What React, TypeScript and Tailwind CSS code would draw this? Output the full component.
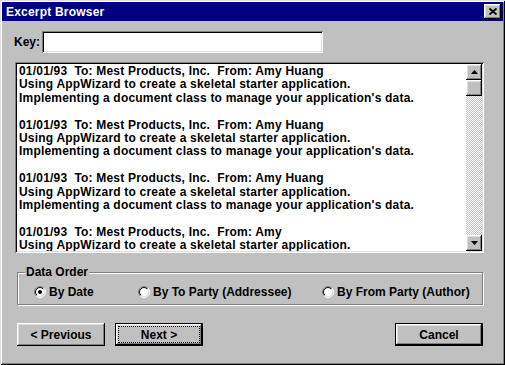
import React from "react";

const raised =
  "shadow-[inset_-1px_-1px_#000,inset_1px_1px_#fff,inset_-2px_-2px_#808080,inset_2px_2px_#dfdfdf]";
const sunken =
  "shadow-[inset_1px_1px_#808080,inset_-1px_-1px_#fff,inset_2px_2px_#000,inset_-2px_-2px_#dfdfdf]";

const entries = [
  [
    "01/01/93  To: Mest Products, Inc.  From: Amy Huang",
    "Using AppWizard to create a skeletal starter application.",
    "Implementing a document class to manage your application's data.",
  ],
  [
    "01/01/93  To: Mest Products, Inc.  From: Amy Huang",
    "Using AppWizard to create a skeletal starter application.",
    "Implementing a document class to manage your application's data.",
  ],
  [
    "01/01/93  To: Mest Products, Inc.  From: Amy Huang",
    "Using AppWizard to create a skeletal starter application.",
    "Implementing a document class to manage your application's data.",
  ],
  [
    "01/01/93  To: Mest Products, Inc.  From: Amy",
    "Using AppWizard to create a skeletal starter application.",
  ],
];

function Radio({ id, checked }: { id: string; checked?: boolean }) {
  return (
    <svg width="12" height="12" viewBox="0 0 12 12" className="shrink-0">
      <defs>
        <linearGradient id={`o-${id}`} x1="0" y1="0" x2="1" y2="1">
          <stop offset="0.5" stopColor="#808080" />
          <stop offset="0.5" stopColor="#ffffff" />
        </linearGradient>
        <linearGradient id={`i-${id}`} x1="0" y1="0" x2="1" y2="1">
          <stop offset="0.5" stopColor="#000000" />
          <stop offset="0.5" stopColor="#dfdfdf" />
        </linearGradient>
      </defs>
      <circle cx="6" cy="6" r="5.5" fill="none" stroke={`url(#o-${id})`} />
      <circle cx="6" cy="6" r="4.5" fill="#fff" stroke={`url(#i-${id})`} />
      {checked && <circle cx="6" cy="6" r="2" fill="#000" />}
    </svg>
  );
}

function Arrow({ up }: { up?: boolean }) {
  return (
    <svg width="7" height="4" viewBox="0 0 7 4">
      <path d={up ? "M3.5 0 L7 4 L0 4 Z" : "M0 0 L7 0 L3.5 4 Z"} fill="#000" />
    </svg>
  );
}

function Button({ label, isDefault, focused }: { label: string; isDefault?: boolean; focused?: boolean }) {
  return (
    <div className={`w-[88px] h-[23px] flex ${isDefault ? "border border-black" : ""}`}>
      <div className={`flex-1 flex items-center justify-center ${raised} p-[3px]`}>
        <div
          className={`flex-1 self-stretch flex items-center justify-center ${
            focused ? "outline outline-1 outline-dotted outline-black" : ""
          }`}
        >
          {label}
        </div>
      </div>
    </div>
  );
}

export default function App() {
  return (
    <div
      className={`w-[505px] h-[365px] bg-[#c0c0c0] p-[2px] flex flex-col text-black text-[12px] font-bold font-['Liberation_Sans',Arial,sans-serif] shadow-[inset_1px_1px_#dfdfdf,inset_-1px_-1px_#000,inset_2px_2px_#fff,inset_-2px_-2px_#808080] overflow-hidden`}
    >
      {/* title bar */}
      <div className="h-[19px] bg-[#000080] flex items-center justify-between pl-[4px] pr-[2px]">
        <span className="text-white text-[12px] font-bold tracking-[0.2px]">Excerpt Browser</span>
        <div className={`w-[17px] h-[15px] bg-[#c0c0c0] flex items-center justify-center ${raised}`}>
          <svg width="8" height="7" viewBox="0 0 8 7">
            <path d="M0.5 0.5 L7.5 6.5 M7.5 0.5 L0.5 6.5" stroke="#000" strokeWidth="1.8" />
          </svg>
        </div>
      </div>

      <div className="flex flex-col pl-[13px]">
        {/* key row */}
        <div className="mt-[10px] flex items-center h-[22px]">
          <label className="ml-[-1px] w-[28px]">Key:</label>
          <div className={`w-[281px] h-[22px] bg-white ${sunken}`} />
        </div>

        {/* list box */}
        <div className={`mt-[9px] w-[469px] h-[191px] bg-white p-[2px] flex ${sunken}`}>
          <div className="flex-1 overflow-hidden pl-[2px] pt-[1px] leading-[13.4px] tracking-[0.2px] whitespace-pre">
            {entries.map((block, i) => (
              <div key={i}>
                {block.map((line, j) => (
                  <div key={j}>{line}</div>
                ))}
                {i < entries.length - 1 && <div>&nbsp;</div>}
              </div>
            ))}
          </div>
          <div className="w-[16px] flex flex-col bg-[repeating-conic-gradient(#c0c0c0_0_25%,#fff_0_50%)] bg-[length:2px_2px]">
            <div className={`h-[16px] bg-[#c0c0c0] flex items-center justify-center ${raised}`}>
              <Arrow up />
            </div>
            <div className={`h-[16px] bg-[#c0c0c0] ${raised}`} />
            <div className="flex-1" />
            <div className={`h-[16px] bg-[#c0c0c0] flex items-center justify-center ${raised}`}>
              <Arrow />
            </div>
          </div>
        </div>

        {/* group box */}
        <fieldset className="mt-[10px] ml-[2px] w-[466px] h-[42px] border border-[#808080] shadow-[1px_1px_#fff,inset_1px_1px_#fff]">
          <legend className="ml-[7px] px-[1px] bg-[#c0c0c0] font-bold">Data Order</legend>
          <div className="flex items-center mt-[2px]">
            <div className="w-[120px] pl-[16px] flex items-center gap-[3px]">
              <Radio id="a" checked />
              <span>By Date</span>
            </div>
            <div className="w-[184px] flex items-center gap-[3px]">
              <Radio id="b" />
              <span>By To Party (Addressee)</span>
            </div>
            <div className="flex items-center gap-[3px]">
              <Radio id="c" />
              <span>By From Party (Author)</span>
            </div>
          </div>
        </fieldset>

        {/* buttons */}
        <div className="mt-[18px] ml-[2px] w-[466px] flex items-center">
          <Button label="< Previous" />
          <div className="ml-[10px]">
            <Button label="Next >" isDefault focused />
          </div>
          <div className="ml-auto">
            <Button label="Cancel" isDefault />
          </div>
        </div>
      </div>
    </div>
  );
}
